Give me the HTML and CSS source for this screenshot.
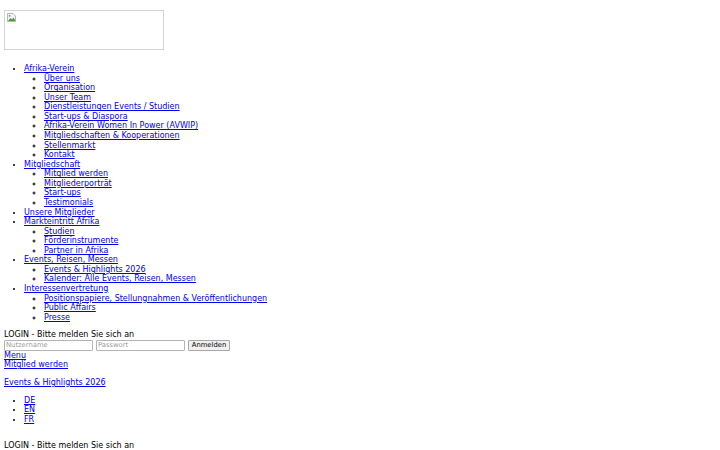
FILE: index.html
```html
<!DOCTYPE html>
<html lang="de">
<head>
    <meta charset="UTF-8">
    <title>Afrika-Verein</title>
    <link rel="stylesheet" href="styles.css">
</head>
<body>
    <div class="logo-row">
        <a class="logo" href="#">
            <svg class="broken" width="9" height="9" viewBox="0 0 9 9">
                <path d="M0.5 0.5h5.5l2.5 2.5v5.5h-8z" fill="#f4f4f4" stroke="#9a9a9a" stroke-width="0.7"/>
                <path d="M1 8l2.5-3 1.5 1.5 1.5-2 2 3.5z" fill="#4a9a3a"/>
                <circle cx="2.6" cy="2.8" r="0.9" fill="#5b8bd0"/>
            </svg>
        </a>
    </div>

    <ul class="nav">
        <li><a href="#">Afrika-Verein</a>
            <ul>
                <li><a href="#">Über uns</a></li>
                <li><a href="#">Organisation</a></li>
                <li><a href="#">Unser Team</a></li>
                <li><a href="#">Dienstleistungen Events / Studien</a></li>
                <li><a href="#">Start-ups &amp; Diaspora</a></li>
                <li><a href="#">Afrika-Verein Women In Power (AVWIP)</a></li>
                <li><a href="#">Mitgliedschaften &amp; Kooperationen</a></li>
                <li><a href="#">Stellenmarkt</a></li>
                <li><a href="#">Kontakt</a></li>
            </ul>
        </li>
        <li><a href="#">Mitgliedschaft</a>
            <ul>
                <li><a href="#">Mitglied werden</a></li>
                <li><a href="#">Mitgliederporträt</a></li>
                <li><a href="#">Start-ups</a></li>
                <li><a href="#">Testimonials</a></li>
            </ul>
        </li>
        <li><a href="#">Unsere Mitglieder</a></li>
        <li><a href="#">Markteintritt Afrika</a>
            <ul>
                <li><a href="#">Studien</a></li>
                <li><a href="#">Förderinstrumente</a></li>
                <li><a href="#">Partner in Afrika</a></li>
            </ul>
        </li>
        <li><a href="#">Events, Reisen, Messen</a>
            <ul>
                <li><a href="#">Events &amp; Highlights 2026</a></li>
                <li><a href="#">Kalender: Alle Events, Reisen, Messen</a></li>
            </ul>
        </li>
        <li><a href="#">Interessenvertretung</a>
            <ul>
                <li><a href="#">Positionspapiere, Stellungnahmen &amp; Veröffentlichungen</a></li>
                <li><a href="#">Public Affairs</a></li>
                <li><a href="#">Presse</a></li>
            </ul>
        </li>
    </ul>

    <div class="login">
        <div>LOGIN - Bitte melden Sie sich an</div>
        <form class="login-form">
            <input type="text" placeholder="Nutzername">
            <input type="password" placeholder="Passwort">
            <input type="submit" value="Anmelden">
        </form>
    </div>
    <a href="#">Menu</a><br>
    <a href="#">Mitglied werden</a>
    <p><a href="#">Events &amp; Highlights 2026</a></p>
    <ul class="lang">
        <li><a href="#">DE</a></li>
        <li><a href="#">EN</a></li>
        <li><a href="#">FR</a></li>
    </ul>

    <div class="login login-bottom">
        <div>LOGIN - Bitte melden Sie sich an</div>
        <form class="login-form">
            <input type="text" placeholder="Nutzername">
            <input type="password" placeholder="Passwort">
            <input type="submit" value="Anmelden">
        </form>
    </div>
</body>
</html>
```

FILE: styles.css
```css
body {
    font-family: "DejaVu Sans", sans-serif;
    font-size: 8px;
    line-height: 9.56px;
    color: #000;
    margin: 4px;
}
a {
    color: #0000ee;
}
.logo-row {
    padding-top: 6px;
}
.logo {
    display: inline-block;
    width: 158px;
    height: 38px;
    border: 1px solid #d4d4d4;
    vertical-align: baseline;
}
.broken {
    display: block;
    margin: 2px 0 0 2px;
}
ul {
    margin: 8.2px 0;
    padding-left: 20px;
}
ul ul {
    margin: 0;
    list-style-type: circle;
}
.nav {
    margin-top: 11.5px;
}
p {
    margin: 8.2px 0;
}
.login-form {
    margin: 0;
    display: flex;
    gap: 3px;
}
.login-form input {
    font-family: "DejaVu Sans", sans-serif;
    font-size: 6.8px;
    height: 10.5px;
    box-sizing: border-box;
    margin: 0;
    padding: 0 1px;
    border: 1px solid #b4b4b4;
    border-radius: 1px;
}
.login-form input[type="text"],
.login-form input[type="password"] {
    width: 89px;
}
.login-form input::placeholder {
    color: #9a9a9a;
}
.login-form input[type="submit"] {
    width: 42px;
    background-color: #f0f0f0;
    border-color: #a8a8a8;
    color: #000;
    padding: 0;
}
.login-bottom {
    margin-top: 16.5px;
}
```
